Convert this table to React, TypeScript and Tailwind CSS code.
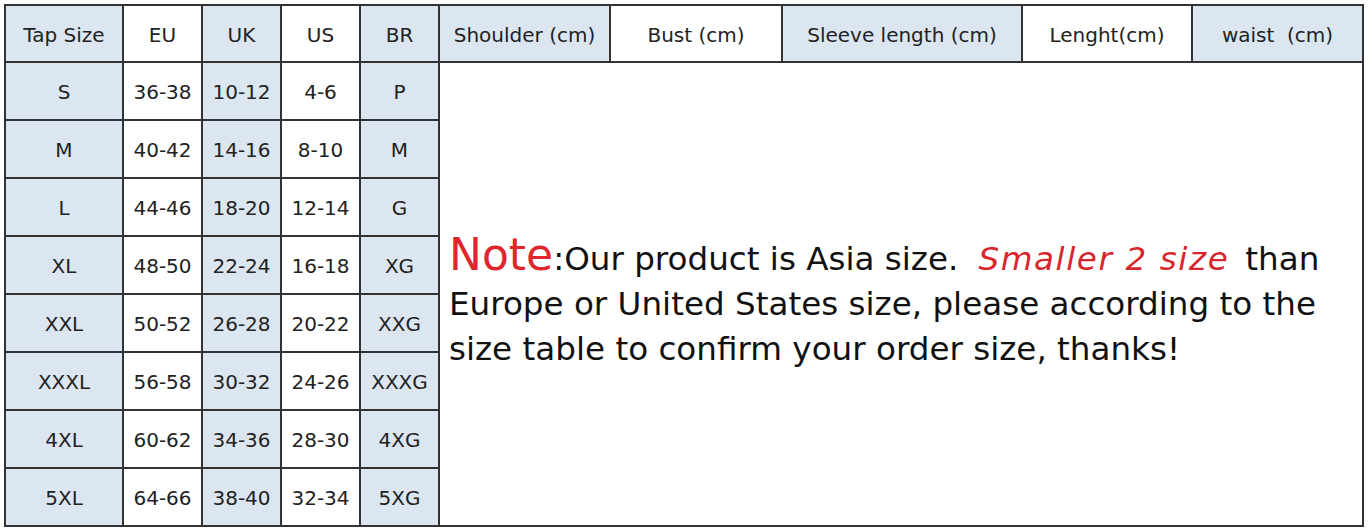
import React from "react";

const headers = [
  { label: "Tap Size", blue: true },
  { label: "EU", blue: false },
  { label: "UK", blue: true },
  { label: "US", blue: false },
  { label: "BR", blue: true },
  { label: "Shoulder (cm)", blue: true },
  { label: "Bust (cm)", blue: false },
  { label: "Sleeve length (cm)", blue: true },
  { label: "Lenght(cm)", blue: false },
  { label: "waist\u00a0 (cm)", blue: true },
];

const rows = [
  ["S", "36-38", "10-12", "4-6", "P"],
  ["M", "40-42", "14-16", "8-10", "M"],
  ["L", "44-46", "18-20", "12-14", "G"],
  ["XL", "48-50", "22-24", "16-18", "XG"],
  ["XXL", "50-52", "26-28", "20-22", "XXG"],
  ["XXXL", "56-58", "30-32", "24-26", "XXXG"],
  ["4XL", "60-62", "34-36", "28-30", "4XG"],
  ["5XL", "64-66", "38-40", "32-34", "5XG"],
];

export default function App() {
  return (
    <div className="min-h-screen bg-white pl-[4px] pt-[4px] font-['DejaVu_Sans',sans-serif] text-[#222]">
      <div className="grid w-[1360px] grid-cols-[118px_79px_79px_79px_79px_171px_172px_240px_170px_171px] grid-rows-[57px_repeat(8,58px)] border-l-2 border-t-2 border-[#333]">
        {headers.map((h) => (
          <div
            key={h.label}
            className={`flex items-center justify-center whitespace-pre border-b-2 border-r-2 border-[#333] pt-[3px] text-[20px] ${
              h.blue ? "bg-[#dce6f1]" : "bg-white"
            }`}
          >
            {h.label}
          </div>
        ))}

        {/* note block sits over the right-hand measurement columns */}
        <div className="col-span-5 col-start-6 row-span-8 row-start-2 flex items-center border-b-2 border-r-2 border-[#333] bg-white pl-[9px] pt-[16px]">
          <p className="text-[32.6px] leading-[45px] text-[#111]">
            <span className="text-[44px] leading-none text-[#e0262c]">Note</span>:Our product is Asia size.
            <span className="ml-[20px] mr-[16px] italic tracking-[1.6px] text-[#d8262c]">Smaller 2 size</span>than
            <br />
            Europe or United States size, please according to the
            <br />
            size table to confirm your order size, thanks!
          </p>
        </div>

        {rows.map((r) =>
          r.map((v, i) => (
            <div
              key={r[0] + i}
              className={`flex items-center justify-center border-b-2 border-r-2 border-[#333] pt-[2px] text-[20px] ${
                i % 2 === 0 ? "bg-[#dce6f1]" : "bg-white"
              }`}
            >
              {v}
            </div>
          ))
        )}
      </div>
    </div>
  );
}
